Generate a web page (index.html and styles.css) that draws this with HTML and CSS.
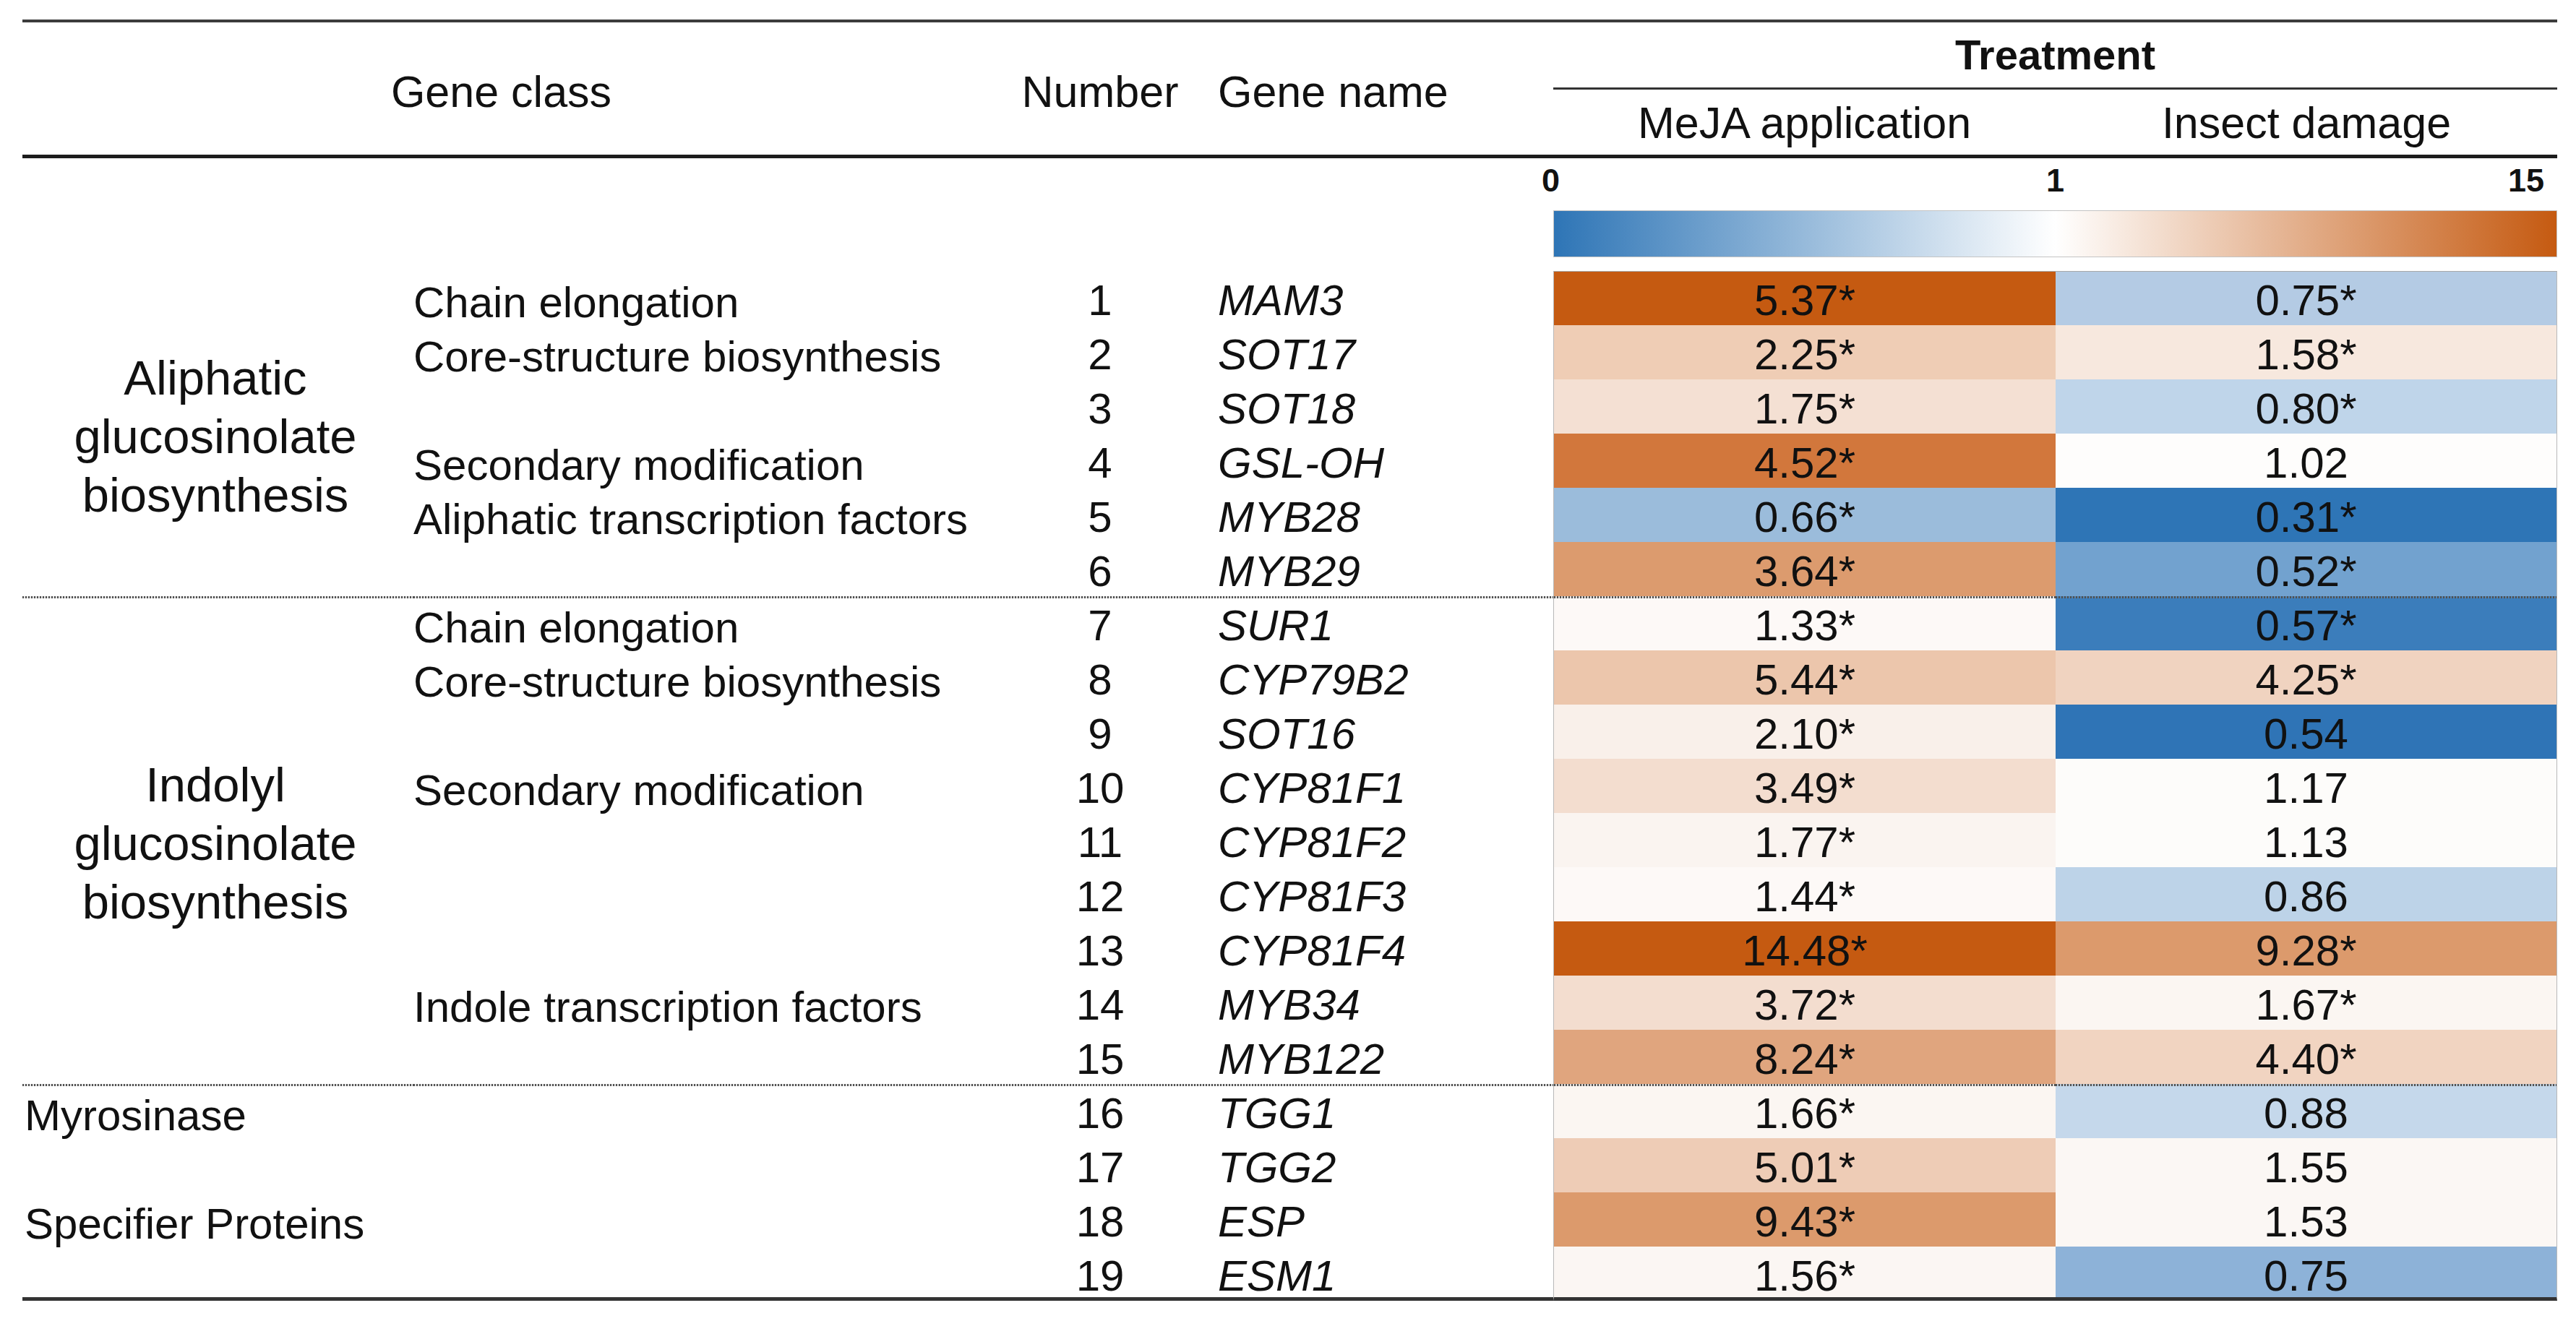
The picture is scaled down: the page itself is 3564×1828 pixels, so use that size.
FILE: index.html
```html
<!DOCTYPE html>
<html lang="en">
<head>
<meta charset="utf-8">
<title>Glucosinolate gene expression</title>
<link rel="stylesheet" href="styles.css">
</head>
<body>
<div class="page">
  <div class="head grid">
    <div class="hd hd-class">Gene class</div>
    <div class="hd hd-num">Number</div>
    <div class="hd hd-gene">Gene name</div>
    <div class="hd-treat">Treatment</div>
    <div class="hd hd-sub hd-m">MeJA application</div>
    <div class="hd hd-sub hd-i">Insect damage</div>
  </div>

  <div class="legend grid">
    <div class="legend-box">
      <div class="scale">
        <span class="s0">0</span>
        <span class="s1">1</span>
        <span class="s15">15</span>
      </div>
      <div class="bar"></div>
    </div>
  </div>

  <div class="body grid">
    <div class="grp g-ali"><span>Aliphatic<br>glucosinolate<br>biosynthesis</span></div>
    <div class="grp g-ind sep"><span>Indolyl<br>glucosinolate<br>biosynthesis</span></div>

    <div class="c sub first">Chain elongation</div><div class="c num first">1</div><div class="c gene first">MAM3</div><div class="c hm m first" style="background-color:#c55a11">5.37*</div><div class="c hm i first" style="background-color:#b4cbe4">0.75*</div>
    <div class="c sub">Core-structure biosynthesis</div><div class="c num">2</div><div class="c gene">SOT17</div><div class="c hm m" style="background-color:#efcdb5">2.25*</div><div class="c hm i" style="background-color:#f7e8de">1.58*</div>
    <div class="c sub"></div><div class="c num">3</div><div class="c gene">SOT18</div><div class="c hm m" style="background-color:#f4e0d3">1.75*</div><div class="c hm i" style="background-color:#bfd5ea">0.80*</div>
    <div class="c sub">Secondary modification</div><div class="c num">4</div><div class="c gene">GSL-OH</div><div class="c hm m" style="background-color:#d2773c">4.52*</div><div class="c hm i" style="background-color:#fefdfc">1.02</div>
    <div class="c sub">Aliphatic transcription factors</div><div class="c num">5</div><div class="c gene">MYB28</div><div class="c hm m" style="background-color:#9bbcdb">0.66*</div><div class="c hm i" style="background-color:#2e75b6">0.31*</div>
    <div class="c sub"></div><div class="c num">6</div><div class="c gene">MYB29</div><div class="c hm m" style="background-color:#dc9b6e">3.64*</div><div class="c hm i" style="background-color:#72a2cf">0.52*</div>

    <div class="c sub sep">Chain elongation</div><div class="c num sep">7</div><div class="c gene sep">SUR1</div><div class="c hm m sep" style="background-color:#fdf9f7">1.33*</div><div class="c hm i sep" style="background-color:#3b7dbb">0.57*</div>
    <div class="c sub">Core-structure biosynthesis</div><div class="c num">8</div><div class="c gene">CYP79B2</div><div class="c hm m" style="background-color:#ecc6ac">5.44*</div><div class="c hm i" style="background-color:#f0d3c0">4.25*</div>
    <div class="c sub"></div><div class="c num">9</div><div class="c gene">SOT16</div><div class="c hm m" style="background-color:#f9f0ea">2.10*</div><div class="c hm i" style="background-color:#2f74b6">0.54</div>
    <div class="c sub">Secondary modification</div><div class="c num">10</div><div class="c gene">CYP81F1</div><div class="c hm m" style="background-color:#f3ddcf">3.49*</div><div class="c hm i" style="background-color:#fdfcfa">1.17</div>
    <div class="c sub"></div><div class="c num">11</div><div class="c gene">CYP81F2</div><div class="c hm m" style="background-color:#faf4f0">1.77*</div><div class="c hm i" style="background-color:#fdfcfa">1.13</div>
    <div class="c sub"></div><div class="c num">12</div><div class="c gene">CYP81F3</div><div class="c hm m" style="background-color:#fdf9f7">1.44*</div><div class="c hm i" style="background-color:#bdd3e8">0.86</div>
    <div class="c sub"></div><div class="c num">13</div><div class="c gene">CYP81F4</div><div class="c hm m" style="background-color:#c55a11">14.48*</div><div class="c hm i" style="background-color:#dc9a6c">9.28*</div>
    <div class="c sub">Indole transcription factors</div><div class="c num">14</div><div class="c gene">MYB34</div><div class="c hm m" style="background-color:#f3ddcf">3.72*</div><div class="c hm i" style="background-color:#fbf6f2">1.67*</div>
    <div class="c sub"></div><div class="c num">15</div><div class="c gene">MYB122</div><div class="c hm m" style="background-color:#e0a57e">8.24*</div><div class="c hm i" style="background-color:#f1d4c1">4.40*</div>

    <div class="c top sep">Myrosinase</div><div class="c sub sep"></div><div class="c num sep">16</div><div class="c gene sep">TGG1</div><div class="c hm m sep" style="background-color:#fbf6f2">1.66*</div><div class="c hm i sep" style="background-color:#c5d8eb">0.88</div>
    <div class="c top"></div><div class="c sub"></div><div class="c num">17</div><div class="c gene">TGG2</div><div class="c hm m" style="background-color:#eeccb6">5.01*</div><div class="c hm i" style="background-color:#fbf7f4">1.55</div>
    <div class="c top">Specifier Proteins</div><div class="c sub"></div><div class="c num">18</div><div class="c gene">ESP</div><div class="c hm m" style="background-color:#dc9a6c">9.43*</div><div class="c hm i" style="background-color:#fbf7f4">1.53</div>
    <div class="c top last"></div><div class="c sub last"></div><div class="c num last">19</div><div class="c gene last">ESM1</div><div class="c hm m last" style="background-color:#fbf6f3">1.56*</div><div class="c hm i last" style="background-color:#8db2d8">0.75</div>
  </div>
</div>
</body>
</html>
```

FILE: styles.css
```css
* {
  box-sizing: border-box;
}

html, body {
  margin: 0;
  padding: 0;
  background: #ffffff;
}

body {
  font-family: "Liberation Sans", Arial, sans-serif;
  color: #111111;
}

.page {
  padding: 27px 0 0 31px;
  width: 3564px;
}

.grid {
  display: grid;
  grid-template-columns: 541px 788px 324px 465px 695px 694px;
  width: 3507px;
}

/* ---------- header ---------- */
.head {
  border-top: 4px solid #3c3c3c;
  grid-template-rows: 93px 95px;
}

.hd {
  font-size: 61px;
  border-bottom: 5px solid #1c1c1c;
  white-space: nowrap;
}

.hd-class,
.hd-num,
.hd-gene {
  grid-row: 1 / 3;
  padding-top: 61px;
  line-height: 70px;
}

.hd-class {
  grid-column: 1 / 3;
  text-align: center;
  padding-right: 4px;
}

.hd-num {
  grid-column: 3;
  text-align: center;
}

.hd-gene {
  grid-column: 4;
  padding-left: 1px;
}

.hd-treat {
  grid-column: 5 / 7;
  grid-row: 1;
  font-size: 58px;
  font-weight: bold;
  text-align: center;
  line-height: 90px;
  border-bottom: 3px solid #333333;
}

.hd-sub {
  grid-row: 2;
  text-align: center;
  padding-top: 3px;
  line-height: 87px;
}

.hd-m { grid-column: 5; }
.hd-i { grid-column: 6; }

/* ---------- legend ---------- */
.legend-box {
  grid-column: 5 / 7;
  padding-bottom: 19px;
}

.scale {
  display: grid;
  grid-template-columns: 1fr auto 1fr;
  font-size: 45px;
  font-weight: bold;
  line-height: 61px;
}

.s0 {
  justify-self: start;
  margin-left: -16px;
}

.s1 {
  justify-self: center;
}

.s15 {
  justify-self: end;
  margin-right: 18px;
}

.bar {
  margin-top: 11px;
  height: 65px;
  border: 1px solid #c4c4c4;
  background: linear-gradient(to right, #2e75b6 0%, #ffffff 50%, #c55a11 100%);
}

/* ---------- body ---------- */
.body {
  grid-auto-rows: 75px;
}

.c {
  font-size: 60px;
  line-height: 68px;
  padding-top: 7px;
  white-space: nowrap;
}

.grp {
  grid-column: 1;
  display: flex;
  align-items: center;
  justify-content: center;
  text-align: center;
  font-size: 67px;
  line-height: 81px;
  padding-top: 7px;
  padding-right: 7px;
}

.g-ali { grid-row: 1 / 7; }
.g-ind { grid-row: 7 / 16; }

.top {
  grid-column: 1;
  padding-left: 3px;
  padding-top: 10px;
}

.sub {
  grid-column: 2;
  padding-top: 10px;
}

.num {
  grid-column: 3;
  text-align: center;
}

.gene {
  grid-column: 4;
  font-style: italic;
  padding-left: 1px;
}

.hm {
  text-align: center;
}

.m {
  grid-column: 5;
  border-left: 1px solid #b8b8b8;
}

.i {
  grid-column: 6;
  border-right: 1px solid #b8b8b8;
}

.hm.first {
  border-top: 1px solid #a8a8a8;
  padding-top: 6px;
}

.sep {
  background-image: repeating-linear-gradient(to right, #505050 0 2px, rgba(150, 150, 150, 0.25) 2px 4px);
  background-size: 100% 3px;
  background-repeat: no-repeat;
  background-position: 0 0;
}

.last {
  border-bottom: 5px solid #333333;
}
```
